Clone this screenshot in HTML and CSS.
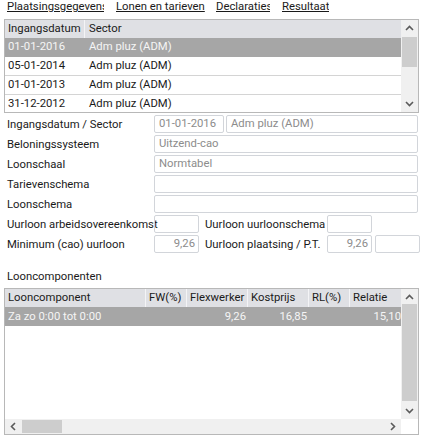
FILE: index.html
```html
<!DOCTYPE html>
<html>
<head>
<meta charset="utf-8">
<link rel="stylesheet" href="styles.css">
</head>
<body>
<div class="tabs">
  <span class="tab t1">Plaatsingsgegevens</span>
  <span class="tab t2">Lonen en tarieven</span>
  <span class="tab t3">Declaraties</span>
  <span class="tab t4">Resultaat</span>
</div>

<div class="grid grid-top">
  <div class="gbody">
    <div class="row head">
      <div class="c cdate">Ingangsdatum</div><div class="c csector">Sector</div>
    </div>
    <div class="row sel">
      <div class="c cdate">01-01-2016</div><div class="c csector">Adm pluz (ADM)</div>
    </div>
    <div class="row">
      <div class="c cdate">05-01-2014</div><div class="c csector">Adm pluz (ADM)</div>
    </div>
    <div class="row">
      <div class="c cdate">01-01-2013</div><div class="c csector">Adm pluz (ADM)</div>
    </div>
    <div class="row">
      <div class="c cdate">31-12-2012</div><div class="c csector">Adm pluz (ADM)</div>
    </div>
  </div>
  <div class="vscroll vs-top">
    <svg class="arr" width="17" height="17" viewBox="0 0 17 17"><polyline points="5,10 8.5,6.5 12,10" fill="none" stroke="#5a5a5a" stroke-width="1.6"/></svg>
    <div class="track"><div class="thumb"></div></div>
    <svg class="arr" width="17" height="17" viewBox="0 0 17 17"><polyline points="5,7 8.5,10.5 12,7" fill="none" stroke="#5a5a5a" stroke-width="1.6"/></svg>
  </div>
</div>

<div class="form">
  <div class="frow">
    <div class="lbl">Ingangsdatum / Sector</div>
    <div class="inp w-date">01-01-2016</div>
    <div class="inp w-sector">Adm pluz (ADM)</div>
  </div>
  <div class="frow">
    <div class="lbl">Beloningssysteem</div>
    <div class="inp w-full">Uitzend-cao</div>
  </div>
  <div class="frow">
    <div class="lbl">Loonschaal</div>
    <div class="inp w-full">Normtabel</div>
  </div>
  <div class="frow">
    <div class="lbl">Tarievenschema</div>
    <div class="inp w-full"></div>
  </div>
  <div class="frow">
    <div class="lbl">Loonschema</div>
    <div class="inp w-full"></div>
  </div>
  <div class="frow">
    <div class="lbl">Uurloon arbeidsovereenkomst</div>
    <div class="inp w-small"></div>
    <div class="lbl2">Uurloon uurloonschema</div>
    <div class="inp w-small"></div>
  </div>
  <div class="frow">
    <div class="lbl">Minimum (cao) uurloon</div>
    <div class="inp w-small num">9,26</div>
    <div class="lbl2">Uurloon plaatsing / P.T.</div>
    <div class="inp w-small num">9,26</div>
    <div class="inp w-small extra"></div>
  </div>
</div>

<div class="section-title">Looncomponenten</div>

<div class="grid grid-bottom">
  <div class="gbody">
    <div class="row head hb">
      <div class="c k1">Looncomponent</div><div class="c k2">FW(%)</div><div class="c k3">Flexwerker</div><div class="c k4">Kostprijs</div><div class="c k5">RL(%)</div><div class="c k6">Relatie</div>
    </div>
    <div class="row sel rb">
      <div class="c k1">Za zo 0:00 tot 0:00</div><div class="c k2 r"></div><div class="c k3 r">9,26</div><div class="c k4 r">16,85</div><div class="c k5 r"></div><div class="c k6 r">15,10</div>
    </div>
  </div>
  <div class="vscroll vs-bottom">
    <svg class="arr" width="17" height="17" viewBox="0 0 17 17"><polyline points="5,10 8.5,6.5 12,10" fill="none" stroke="#5a5a5a" stroke-width="1.6"/></svg>
    <div class="track"><div class="thumb"></div></div>
    <svg class="arr" width="17" height="17" viewBox="0 0 17 17"><polyline points="5,7 8.5,10.5 12,7" fill="none" stroke="#5a5a5a" stroke-width="1.6"/></svg>
  </div>
  <div class="hscroll">
    <svg class="harr" width="17" height="15" viewBox="0 0 17 15"><polyline points="10,4 6.5,7.5 10,11" fill="none" stroke="#5a5a5a" stroke-width="1.6"/></svg>
    <div class="htrack"><div class="hthumb"></div></div>
    <svg class="harr" width="17" height="15" viewBox="0 0 17 15"><polyline points="7,4 10.5,7.5 7,11" fill="none" stroke="#5a5a5a" stroke-width="1.6"/></svg>
  </div>
  <div class="corner"></div>
</div>
</body>
</html>
```

FILE: styles.css
```css
* { box-sizing: border-box; }
html, body { margin: 0; padding: 0; background: #fff; }
body {
  width: 423px;
  height: 438px;
  overflow: hidden;
  font-family: Roboto, "Liberation Sans", sans-serif;
  font-size: 11.3px;
  color: #1a1a1a;
}

.tabs {
  display: flex;
  height: 19px;
  padding-left: 7px;
  gap: 12px;
  line-height: 14px;
}
.tab {
  text-decoration: underline;
  white-space: nowrap;
  overflow: hidden;
  flex: none;
  color: #1a1a1a;
}
.t1 { width: 97px; }
.t2 { width: 88px; overflow: visible; }
.t3 { width: 54px; }

.grid {
  margin: 0 4px 0 4px;
  border: 1px solid #b8b8b8;
  display: grid;
  grid-template-columns: 396px 17px;
}
.grid-top { height: 94px; grid-template-rows: 92px; }
.grid-bottom { height: 147px; grid-template-rows: 130px 15px; }

.gbody { overflow: hidden; }
.row { display: flex; height: 19px; line-height: 18px; border-bottom: 1px solid #d4d4d4; }
.row.head { height: 18px; line-height: 18px; background: #dfe0e4; border-bottom: none; }
.row.sel { background: #a6a6a6; color: #f5f5f5; border-bottom: none; }
.c { padding-left: 3px; white-space: nowrap; overflow: hidden; flex: none; }
.head .c { border-right: 1px solid #f4f4f6; }
.cdate { width: 80px; }
.csector { width: 316px; padding-left: 4px; }
.head .csector { border-right: none; }

.hb { height: 20px; line-height: 20px; }
.rb { height: 19px; line-height: 19px; }
.k1 { width: 141px; }
.k2 { width: 41px; }
.k3 { width: 61px; }
.k4 { width: 61px; }
.k5 { width: 41px; }
.k6 { width: 51px; }
.head .k6 { border-right: none; }
.c.r { text-align: right; padding-left: 0; padding-right: 2px; }
.c.k6.r { padding-right: 0; }

.vscroll {
  background: #f0f0f0;
  display: flex;
  flex-direction: column;
}
.arr { display: block; flex: none; }
.track { flex: 1; position: relative; }
.thumb { position: absolute; left: 1px; right: 1px; background: #cdcdcd; }
.vs-top .thumb { top: 0; height: 30px; }
.vs-bottom .thumb { top: -2px; height: 97px; }

.hscroll {
  background: #f0f0f0;
  display: flex;
  align-items: stretch;
}
.harr { display: block; flex: none; }
.htrack { flex: 1; position: relative; }
.hthumb { position: absolute; left: 0; top: 1px; bottom: 1px; width: 40px; background: #cdcdcd; }
.corner { background: #fff; }

.form { padding-top: 2px; padding-left: 7px; }
.frow { display: flex; align-items: center; height: 18px; margin-bottom: 2px; }
.lbl { width: 147px; flex: none; white-space: nowrap; }
.lbl2 { width: 122px; flex: none; margin-left: 6px; white-space: nowrap; }
.inp {
  height: 18px;
  line-height: 16px;
  border: 1px solid #d2d5da;
  border-radius: 2px;
  padding: 0 4px;
  color: #8c8c8c;
  flex: none;
  white-space: nowrap;
  overflow: hidden;
}
.w-date { width: 70px; }
.w-sector { width: 192px; margin-left: 2px; }
.w-full { width: 264px; }
.w-small { width: 45px; }
.num { text-align: right; padding-right: 3px; }
.extra { margin-left: 3px; }

.section-title { margin-top: 17px; padding-left: 7px; line-height: 14px; height: 18px; }
```
